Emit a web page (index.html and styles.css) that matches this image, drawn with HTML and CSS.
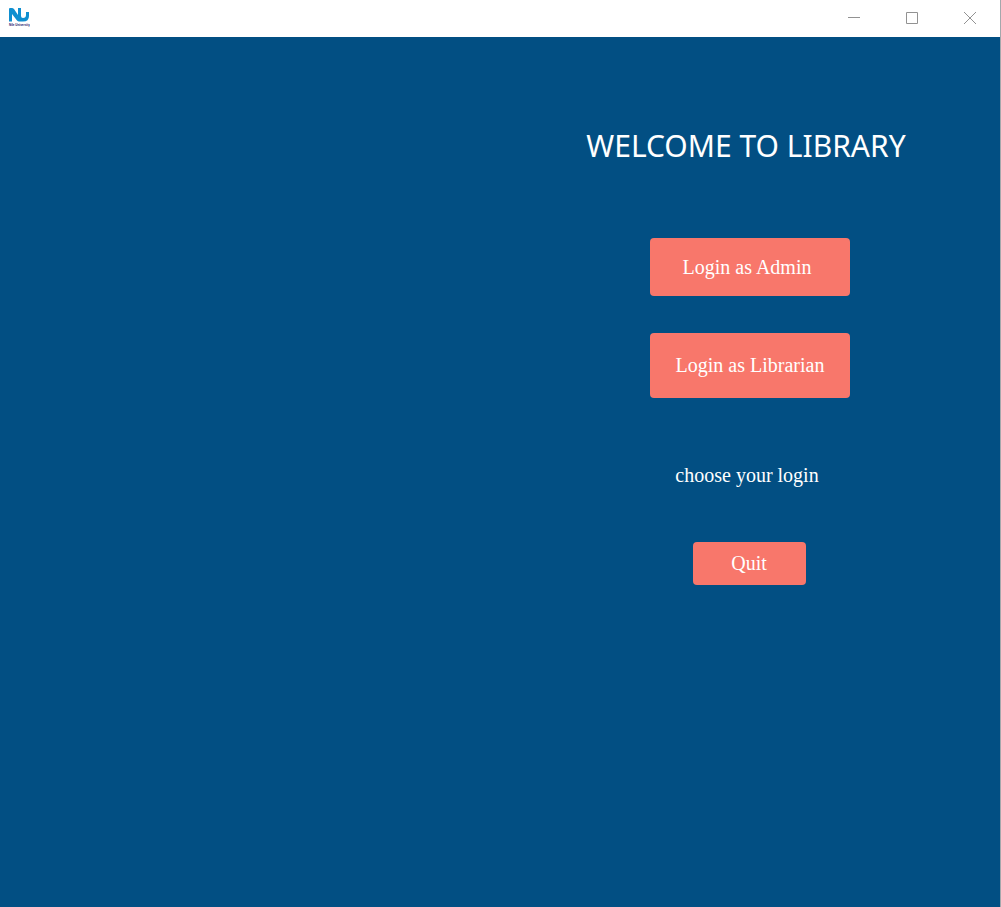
FILE: index.html
```html
<!DOCTYPE html>
<html lang="en">
<head>
<meta charset="utf-8">
<title>Library</title>
<link rel="stylesheet" href="styles.css">
</head>
<body>
<div class="window">
  <header class="titlebar">
    <svg class="logo" viewBox="0 0 22 22" role="img" aria-label="Nile University">
      <path d="M1 14.500V2q0-1 1-1h2q1 0 2 1l4 6V1h3v8q0 2 2 2 3 0 3-3V5h3v4q0 5.500-6 5.500h-4q-1 0-2-1L4 7v7.500z" fill="#0f8fd0"/>
      <text class="logo-text" x="1" y="19" fill="#15156c">Nile University</text>
    </svg>
    <div class="controls">
      <button class="control" type="button" aria-label="Minimize"><svg viewBox="0 0 12 12"><path d="M0 5.5h12"/></svg></button>
      <button class="control" type="button" aria-label="Maximize"><svg viewBox="0 0 12 12"><path d="M.5.5h11v11H.5z"/></svg></button>
      <button class="control" type="button" aria-label="Close"><svg viewBox="0 0 12 12"><path d="M0 0l12 12M12 0L0 12"/></svg></button>
    </div>
  </header>
  <main class="content">
    <section class="panel">
      <h1 class="title">WELCOME TO LIBRARY</h1>
      <button class="btn admin" type="button">Login as Admin</button>
      <button class="btn librarian" type="button">Login as Librarian</button>
      <p class="hint">choose your login</p>
      <button class="btn quit" type="button">Quit</button>
    </section>
  </main>
</div>
</body>
</html>
```
FILE: styles.css
```css
* { box-sizing: border-box; }
body { margin: 0; }
.window {
  display: flex;
  flex-direction: column;
  min-height: 100vh;
  border-right: 1px solid #a3a8ac;
  background: #024f83;
}
.titlebar {
  display: flex;
  align-items: flex-start;
  justify-content: space-between;
  height: 37px;
  padding-left: 8px;
  background: #fff;
}
.logo { width: 22px; height: 22px; margin-top: 7px; }
.logo-text { font: bold 3px "Liberation Sans", Arial, sans-serif; }
.controls { display: flex; padding-right: 1px; }
.control {
  display: flex;
  align-items: center;
  justify-content: center;
  width: 58px;
  height: 36px;
  padding: 0;
  border: 0;
  background: none;
}
.control svg {
  width: 12px;
  height: 12px;
  fill: none;
  stroke: #929292;
  stroke-width: 1;
}
.content {
  display: grid;
  grid-template-columns: 1fr 1fr;
  flex: 1;
}
.panel {
  grid-column: 2;
  display: flex;
  flex-direction: column;
  align-items: center;
  padding-top: 89px;
  color: #fff;
  font-family: "Liberation Serif", "Times New Roman", serif;
  font-size: 20px;
}
.title {
  margin: 0 0 72px;
  padding-right: 8px;
  font: 400 30px/40px "Noto Sans", "Open Sans", sans-serif;
  white-space: nowrap;
}
.btn {
  width: 200px;
  padding: 0;
  border: 0;
  border-radius: 4px;
  background: #f8776b;
  color: #fff;
  font: inherit;
}
.admin { height: 58px; margin-bottom: 37px; padding-right: 6px; }
.librarian { height: 65px; }
.hint { margin: 65px 0 55px; padding-right: 6px; line-height: 24px; }
.quit { width: 113px; height: 43px; margin-right: 2px; }
```
